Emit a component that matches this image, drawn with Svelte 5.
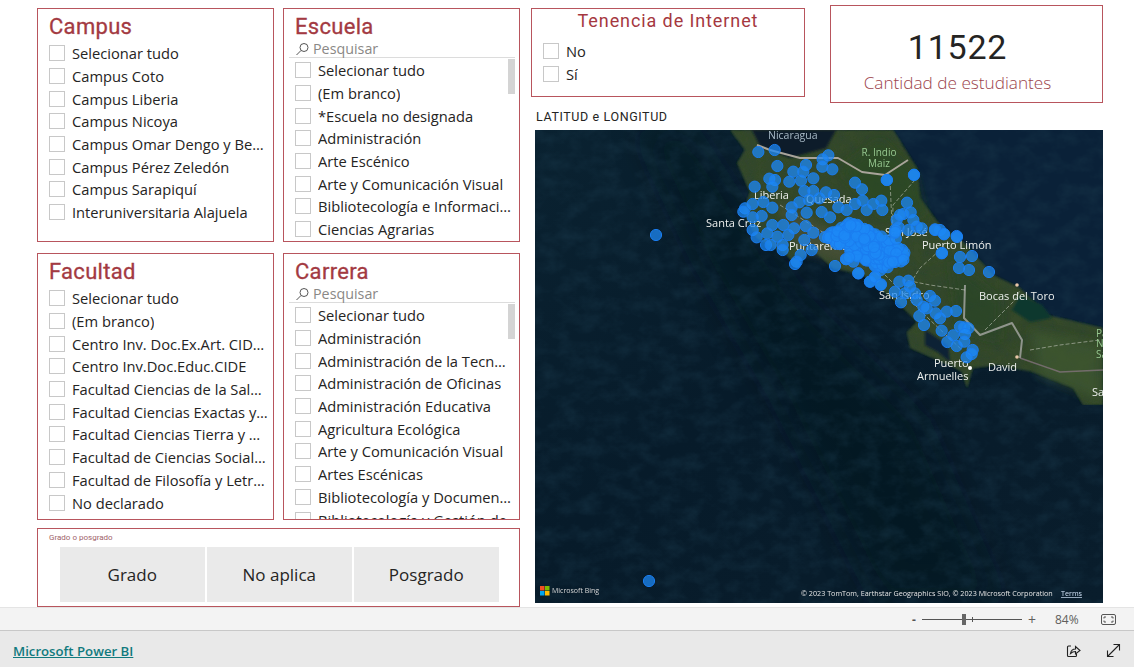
<script lang="ts">
type Slicer = { title: string; search?: boolean; items: string[] };

const campus: Slicer = {
  title: 'Campus',
  items: ['Selecionar tudo', 'Campus Coto', 'Campus Liberia', 'Campus Nicoya', 'Campus Omar Dengo y Benjamín', 'Campus Pérez Zeledón', 'Campus Sarapiquí', 'Interuniversitaria Alajuela'],
};
const escuela: Slicer = {
  title: 'Escuela',
  search: true,
  items: ['Selecionar tudo', '(Em branco)', '*Escuela no designada', 'Administración', 'Arte Escénico', 'Arte y Comunicación Visual', 'Bibliotecología e Información', 'Ciencias Agrarias'],
};
const facultad: Slicer = {
  title: 'Facultad',
  items: ['Selecionar tudo', '(Em branco)', 'Centro Inv. Doc.Ex.Art. CIDEA', 'Centro Inv.Doc.Educ.CIDE', 'Facultad Ciencias de la Salud', 'Facultad Ciencias Exactas y Naturales', 'Facultad Ciencias Tierra y Mar', 'Facultad de Ciencias Sociales', 'Facultad de Filosofía y Letras', 'No declarado'],
};
const carrera: Slicer = {
  title: 'Carrera',
  search: true,
  items: ['Selecionar tudo', 'Administración', 'Administración de la Tecnología', 'Administración de Oficinas', 'Administración Educativa', 'Agricultura Ecológica', 'Arte y Comunicación Visual', 'Artes Escénicas', 'Bibliotecología y Documentación', 'Bibliotecología y Gestión de'],
};
const grados = ['Grado', 'No aplica', 'Posgrado'];

// dots read off the reference, in two crop coordinate systems
const north = [[55,66],[104,60],[112,108],[198,105],[265,76],[248,88],[247,110],[277,118],[190,125],[160,125],[220,145],[148,155],[183,152],[88,146],[105,150],[97,170],[44,170],[345,158],[366,178],[440,150],[522,134],[424,212],[427,240],[501,218],[512,247],[38,222],[15,235],[70,216],[97,233],[10,245],[38,262],[65,258],[38,300],[50,322],[78,345],[92,345],[97,285],[82,310],[112,320],[130,285],[145,315],[128,345],[128,360],[162,295],[155,232],[155,255],[178,217],[193,183],[220,183],[207,210],[238,205],[258,187],[282,195],[200,248],[245,246],[270,262],[197,288],[220,308],[193,330],[215,360],[182,375],[170,395],[165,402],[285,408],[340,395],[355,430],[390,455],[405,440],[422,420],[423,463],[470,270],[490,252],[530,290],[585,298],[600,300],[612,313],[650,318],[605,370],[320,240],[345,222],[368,212],[380,240],[400,222],[295,232],[480,255],[520,270],[545,295],[505,300]];
const south = [[55,10],[90,35],[105,22],[122,45],[178,35],[205,32],[210,50],[165,65],[183,97],[225,70],[230,90],[195,70],[270,78],[285,92],[250,110],[260,115],[238,138],[252,165],[287,130],[300,145],[320,125],[348,123],[305,182],[340,196],[322,216],[350,228],[360,170],[372,172],[385,175],[375,192],[373,215],[398,240],[395,252],[380,262]];
const east = [[935,230],[944,234],[957,237],[942,253],[960,257],[972,256],[959,268],[969,270],[989,272],[914,175],[887,180],[656,235],[649,581]];

function centralDots() {
  // dense metro area, a seeded walk so the picture stays the same
  let seed = 17;
  const rnd = () => (seed = (seed * 16807) % 2147483647) / 2147483647;
  const out: number[][] = [];
  for (let i = 0; i < 190; i++) {
    const u = rnd() * 2 - 1;
    const v = rnd() * 2 - 1;
    out.push([866 + u * 28 + v * 14, 245 + u * 16 - v * 8]);
  }
  for (let i = 0; i < 30; i++) {
    out.push([835 + rnd() * 70, 224 + rnd() * 46]);
  }
  return out;
}

const dots = [
  ...north.map(([x, y]) => [740 + x / 3, 130 + y / 3]),
  ...south.map(([x, y]) => [840 + x / 3, 270 + y / 3]),
  ...east,
  ...centralDots(),
];
</script>

{#snippet slicer(s: Slicer)}
  <section class="panel slicer">
    <h2>{s.title}</h2>
    {#if s.search}
      <div class="search">
        <svg width="15" height="15" viewBox="0 0 15 15" fill="none" stroke="#555" stroke-width="1">
          <circle cx="9" cy="5.5" r="4" />
          <path d="M6 8.5 1.5 13" />
        </svg>
        <span>Pesquisar</span>
      </div>
    {/if}
    <div class="list" class:scrolls={s.search}>
      {#if s.search}<div class="thumb"></div>{/if}
      {#each s.items as item}
        <div class="row"><span class="box"></span><span class="label">{item}</span></div>
      {/each}
    </div>
  </section>
{/snippet}

<div class="page">
  <main class="report">
    <div class="left">
      <div class="pair first">
        {@render slicer(campus)}
        {@render slicer(escuela)}
      </div>
      <div class="pair second">
        {@render slicer(facultad)}
        {@render slicer(carrera)}
      </div>
      <section class="panel grado">
        <div class="grado-title">Grado o posgrado</div>
        <div class="grado-buttons">
          {#each grados as g}
            <div class="grado-btn">{g}</div>
          {/each}
        </div>
      </section>
    </div>

    <div class="right">
      <div class="top">
        <section class="panel tenencia">
          <h3>Tenencia de Internet</h3>
          <div class="row"><span class="box"></span><span class="label">No</span></div>
          <div class="row"><span class="box"></span><span class="label">Sí</span></div>
        </section>
        <section class="panel kpi">
          <div class="kpi-value">11522</div>
          <div class="kpi-label">Cantidad de estudiantes</div>
        </section>
      </div>
      <div class="map-title">LATITUD e LONGITUD</div>
      <svg class="map" width="568" height="473" viewBox="535 130 568 473">
        <defs>
          <linearGradient id="sea" x1="0" y1="0" x2="1" y2="1">
            <stop offset="0" stop-color="#0a2231" />
            <stop offset="0.45" stop-color="#071b2a" />
            <stop offset="1" stop-color="#091d2c" />
          </linearGradient>
          <filter id="seabed" x="0" y="0" width="100%" height="100%">
            <feTurbulence type="fractalNoise" baseFrequency="0.05 0.07" numOctaves="5" seed="8" />
            <feColorMatrix values="0 0 0 0 0.01  0 0 0 0 0.04  0 0 0 0 0.07  0.9 0 0 0 -0.36" />
          </filter>
          <filter id="landtex" x="0" y="0" width="100%" height="100%">
            <feGaussianBlur in="SourceGraphic" stdDeviation="0.9" result="edge" />
            <feTurbulence type="fractalNoise" baseFrequency="0.09" numOctaves="4" seed="3" />
            <feColorMatrix values="0 0 0 0 0.03  0 0 0 0 0.06  0 0 0 0 0.03  1.5 0 0 0 -0.5" />
            <feComposite in2="edge" operator="in" result="mottle" />
            <feMerge>
              <feMergeNode in="edge" />
              <feMergeNode in="mottle" />
            </feMerge>
          </filter>
          <filter id="soft"><feGaussianBlur stdDeviation="1" /></filter>
          <filter id="patch"><feGaussianBlur stdDeviation="5" /></filter>
          <filter id="wide"><feGaussianBlur stdDeviation="16" /></filter>
        </defs>

        <rect x="535" y="130" width="568" height="473" fill="url(#sea)" />
        <path d="M893 130 H1103 V330 L1047 315 L1020 288 L993 275 L963 242 L940 225 L920 198 L917 168 Z" fill="#0a2138" />
        <path d="M640 130 L690 130 L800 300 L920 420 L1000 603 L880 603 L780 400 L700 260 Z" fill="#04121e" opacity="0.5" filter="url(#wide)" />
        <rect x="535" y="130" width="568" height="473" filter="url(#seabed)" />

        <path
          d="M730 130 L745 150 L737 163 L750 192 L743 212 L757 238 L787 255 L797 267 L810 248 L833 268 L863 275 L880 288 L900 305 L917 322 L907 332 L910 348 L933 358 L950 365 L962 372 L967 388 L973 368 L997 365 L1033 372 L1073 388 L1083 405 L1103 405 V328 L1047 315 L1020 288 L993 275 L963 242 L940 225 L920 198 L917 168 L893 130 Z"
          fill="#35492c"
          filter="url(#landtex)"
        />
        <g filter="url(#patch)">
          <path d="M880 140 L915 175 L925 215 L880 215 L840 170 Z" fill="#2a4a24" opacity="0.7" />
          <path d="M950 260 L1000 300 L1000 340 L960 330 Z" fill="#264527" opacity="0.6" />
          <path d="M1030 330 L1100 345 L1100 400 L1040 375 Z" fill="#405a34" opacity="0.6" />
          <path d="M775 200 L850 240 L870 272 L800 250 Z" fill="#50513b" opacity="0.6" />
        </g>
        <g filter="url(#soft)">
          <path d="M925 330 L948 345 L950 362 L938 352 L925 345 Z" fill="#0a2035" />
          <path d="M752 130 H836 L826 148 L790 158 L760 146 Z" fill="#0c1d2c" />
          <path d="M1020 295 L1042 305 L1052 318 L1030 322 L1012 310 Z" fill="#10382f" />
        </g>

        <g fill="none" stroke-linejoin="round">
          <path d="M757 145 L770 150 L800 158 L838 158 L862 172 L885 175 L908 160" stroke="#a9a49a" stroke-width="2" />
          <path d="M965 285 L964 318 L980 335 L1012 323 L1022 340 L1020 358" stroke="#a7a9a5" stroke-width="2" opacity="0.8" />
          <path d="M1020 358 L1060 372 L1103 370" stroke="#8b7786" stroke-width="1.5" opacity="0.7" />
          <path d="M890 180 L892 225 M915 180 L893 205 L892 250 M940 250 L920 268 L900 300 M965 290 L930 285 L905 280 M985 330 L1015 300 L1020 290 M780 205 L835 240 L880 270 L930 320 L962 350 M1030 350 L1060 345 L1100 340" stroke="#cfd2c8" stroke-width="1" stroke-dasharray="4 2" opacity="0.55" />
        </g>

        <g class="labels">
          <text x="768" y="139" class="country">Nicaragua</text>
          <text x="879" y="156" class="park" text-anchor="middle">R. Indio</text>
          <text x="879" y="167" class="park" text-anchor="middle">Maiz</text>
          <text x="754" y="199">Liberia</text>
          <text x="706" y="227">Santa Cruz</text>
          <text x="789" y="250">Puntarenas</text>
          <text x="806" y="203">Quesada</text>
          <text x="885" y="236">San José</text>
          <text x="860" y="262">Cartago</text>
          <text x="922" y="249">Puerto Limón</text>
          <text x="979" y="300">Bocas del Toro</text>
          <text x="879" y="299">San Isidro</text>
          <text x="934" y="367">Puerto</text>
          <text x="917" y="380">Armuelles</text>
          <text x="988" y="371">David</text>
          <text x="1092" y="396">Sa</text>
          <text x="1096" y="337" class="park">Pa</text>
          <text x="1096" y="347" class="park">Na</text>
          <text x="1096" y="358" class="park">Sa</text>
        </g>
        <circle cx="970" cy="368" r="2" fill="#fff" />
        <circle cx="1017" cy="357" r="1.800" fill="#e9c7a8" />
        <circle cx="1017" cy="285" r="1.800" fill="#e9c7a8" />

        <g fill="#1c88f5" fill-opacity="0.74" stroke="#1a7df0" stroke-width="1">
          {#each dots as [x, y]}
            <circle cx={x} cy={y} r="5.600" />
          {/each}
        </g>

        <rect x="540" y="586" width="4.500" height="4.500" fill="#f25022" />
        <rect x="545" y="586" width="4.500" height="4.500" fill="#7fba00" />
        <rect x="540" y="591" width="4.500" height="4.500" fill="#00a4ef" />
        <rect x="545" y="591" width="4.500" height="4.500" fill="#ffb900" />
        <text x="552" y="593" class="bing">Microsoft Bing</text>
        <text x="801" y="596" class="attrib">© 2023 TomTom, Earthstar Geographics SIO, © 2023 Microsoft Corporation</text>
        <text x="1061" y="596" class="attrib terms">Terms</text>
      </svg>
    </div>
  </main>

  <div class="statusbar">
    <span class="minus">-</span>
    <div class="slider"><span class="tick"></span><span class="handle"></span></div>
    <span class="plus">+</span>
    <span class="zoom">84%</span>
    <svg width="15" height="11" viewBox="0 0 15 11" fill="none" stroke="#555" stroke-width="1">
      <rect x="0.5" y="0.5" width="14" height="10" rx="1.5" />
      <path d="M3 4.5V3h2M10 3h2v1.5M12 6.5V8h-2M5 8H3V6.5" />
    </svg>
  </div>

  <footer class="footer">
    <span class="brand">Microsoft Power BI</span>
    <div class="actions">
      <svg width="15" height="15" viewBox="0 0 15 15" fill="none" stroke="#222" stroke-width="1.1">
        <path d="M5 3H2.5A1 1 0 0 0 1.500 4v8.500a1 1 0 0 0 1 1H9.500a1 1 0 0 0 1-1V10.500" />
        <path d="M4.500 10.500C5 7.500 7 6 9.500 6V3.500L14 7.500 9.500 11V8.500C7.500 8.500 6 9 4.500 10.500Z" />
      </svg>
      <svg width="15" height="15" viewBox="0 0 15 15" fill="none" stroke="#222" stroke-width="1.1">
        <path d="M1.500 13.500 13.500 1.500M7.500 1.500h6v6M1.500 7.500v6h6" />
      </svg>
    </div>
  </footer>
</div>

<style>
  :global(body) {
    margin: 0;
    background: #fff;
  }
  .page {
    width: 1134px;
    height: 667px;
    overflow: hidden;
    font-family: 'Open Sans', 'Noto Sans', sans-serif;
    color: #252423;
  }
  .report {
    display: flex;
    height: 607px;
    padding-left: 37px;
    box-sizing: border-box;
  }

  .left {
    width: 483px;
    padding-top: 8px;
    display: flex;
    flex-direction: column;
    box-sizing: border-box;
  }
  .pair {
    display: flex;
    gap: 9px;
  }
  .pair.first {
    height: 234px;
    margin-bottom: 11px;
  }
  .pair.second {
    height: 267px;
    margin-bottom: 8px;
  }

  .panel {
    border: 1px solid #b8555d;
    box-sizing: border-box;
    background: #fff;
  }
  .slicer {
    width: 237px;
    padding: 4px 0 0 11px;
    overflow: hidden;
    display: flex;
    flex-direction: column;
  }
  h2 {
    margin: 0;
    font-family: Roboto, sans-serif;
    font-size: 22px;
    font-weight: 400;
    line-height: 28px;
    letter-spacing: 0.3px;
    color: #a33a42;
    -webkit-text-stroke: 0.3px #a33a42;
  }
  .search {
    display: flex;
    align-items: center;
    gap: 3px;
    height: 16px;
    margin-left: -6px;
    margin-right: 4px;
    padding-left: 6px;
    border-bottom: 1px solid #dcdcdc;
    font-size: 14.300px;
    line-height: 16px;
    color: #8a8886;
  }
  .list {
    position: relative;
    margin-top: 1px;
  }
  .list.scrolls {
    flex: 1;
    overflow: hidden;
  }
  .thumb {
    position: absolute;
    top: -1px;
    right: 4px;
    width: 7px;
    height: 36px;
    background: #d4d4d4;
  }
  .row {
    display: flex;
    align-items: center;
    height: 22.700px;
    padding-right: 5px;
    font-size: 14.700px;
  }
  .box {
    flex: none;
    width: 14px;
    height: 14px;
    margin-right: 7px;
    border: 1px solid #c8c8c8;
    background: #fff;
  }
  .label {
    white-space: nowrap;
    overflow: hidden;
    text-overflow: ellipsis;
    min-width: 0;
  }

  .grado {
    height: 79px;
    padding: 3px 0 0 11px;
  }
  .grado-title {
    font-family: Roboto, sans-serif;
    font-size: 8px;
    line-height: 11px;
    color: #a0636a;
  }
  .grado-buttons {
    display: flex;
    gap: 2.500px;
    margin-top: 4px;
    margin-left: 11px;
  }
  .grado-btn {
    width: 144.500px;
    height: 55px;
    background: #eaeaea;
    display: flex;
    align-items: center;
    justify-content: center;
    font-size: 17px;
  }

  .right {
    margin-left: 11px;
    width: 573px;
  }
  .top {
    display: flex;
    align-items: flex-start;
    gap: 25px;
    height: 107px;
    padding-top: 5px;
    box-sizing: border-box;
  }
  .tenencia {
    width: 274px;
    height: 89px;
    margin-top: 3px;
    padding: 0 11px;
  }
  h3 {
    margin: 0 0 8px;
    font-family: Roboto, sans-serif;
    font-size: 18px;
    font-weight: 400;
    line-height: 23px;
    letter-spacing: 0.9px;
    text-align: center;
    color: #a5383f;
  }
  .kpi {
    width: 273px;
    height: 98px;
    text-align: center;
    padding: 21px 18px 0 0;
  }
  .kpi-value {
    font-family: Roboto, sans-serif;
    font-size: 34px;
    font-weight: 400;
    line-height: 41px;
    letter-spacing: 0.800px;
    color: #252423;
  }
  .kpi-label {
    font-size: 17.200px;
    font-weight: 300;
    line-height: 22px;
    margin-top: 4px;
    color: #9c444c;
  }
  .map-title {
    height: 23px;
    margin-left: 5px;
    font-family: Roboto, sans-serif;
    font-size: 12.500px;
    font-weight: 400;
    line-height: 20px;
    letter-spacing: 0.600px;
  }
  .map {
    display: block;
    margin-left: 4px;
  }
  .labels text {
    font-family: 'Open Sans', sans-serif;
    font-size: 11px;
    fill: #eef0ee;
  }
  .labels text.country {
    font-size: 10.500px;
    fill: #a8bac6;
  }
  .labels text.park {
    font-size: 10px;
    fill: #96c78f;
  }
  .bing {
    font-family: 'Open Sans', sans-serif;
    font-size: 7px;
    fill: #d6d6d6;
  }
  .attrib {
    font-family: 'Open Sans', sans-serif;
    font-size: 7.200px;
    fill: #e4e4e4;
  }
  .terms {
    fill: #cfe0f5;
    text-decoration: underline;
  }

  .statusbar {
    height: 24px;
    box-sizing: border-box;
    background: #f3f3f3;
    border-top: 1px solid #e4e4e4;
    border-bottom: 1px solid #c8c8c8;
    display: flex;
    align-items: center;
    padding-left: 912px;
    font-size: 12px;
    color: #605e5c;
  }
  .minus {
    width: 10px;
    font-weight: 700;
    color: #555;
  }
  .slider {
    position: relative;
    width: 100px;
    height: 1px;
    background: #555;
  }
  .handle {
    position: absolute;
    left: 40px;
    top: -5px;
    width: 4px;
    height: 11px;
    background: #666;
  }
  .tick {
    position: absolute;
    left: 50px;
    top: -2px;
    width: 1px;
    height: 5px;
    background: #555;
  }
  .plus {
    margin-left: 6px;
    font-size: 14px;
    width: 27px;
  }
  .zoom {
    width: 46px;
  }
  .footer {
    height: 36px;
    background: #e9e9e9;
    display: flex;
    align-items: center;
    justify-content: space-between;
    padding: 3px 13px 0 13px;
    box-sizing: border-box;
  }
  .brand {
    font-size: 13.200px;
    font-weight: 600;
    color: #117a7e;
    text-decoration: underline;
  }
  .actions {
    display: flex;
    gap: 25px;
  }
</style>
